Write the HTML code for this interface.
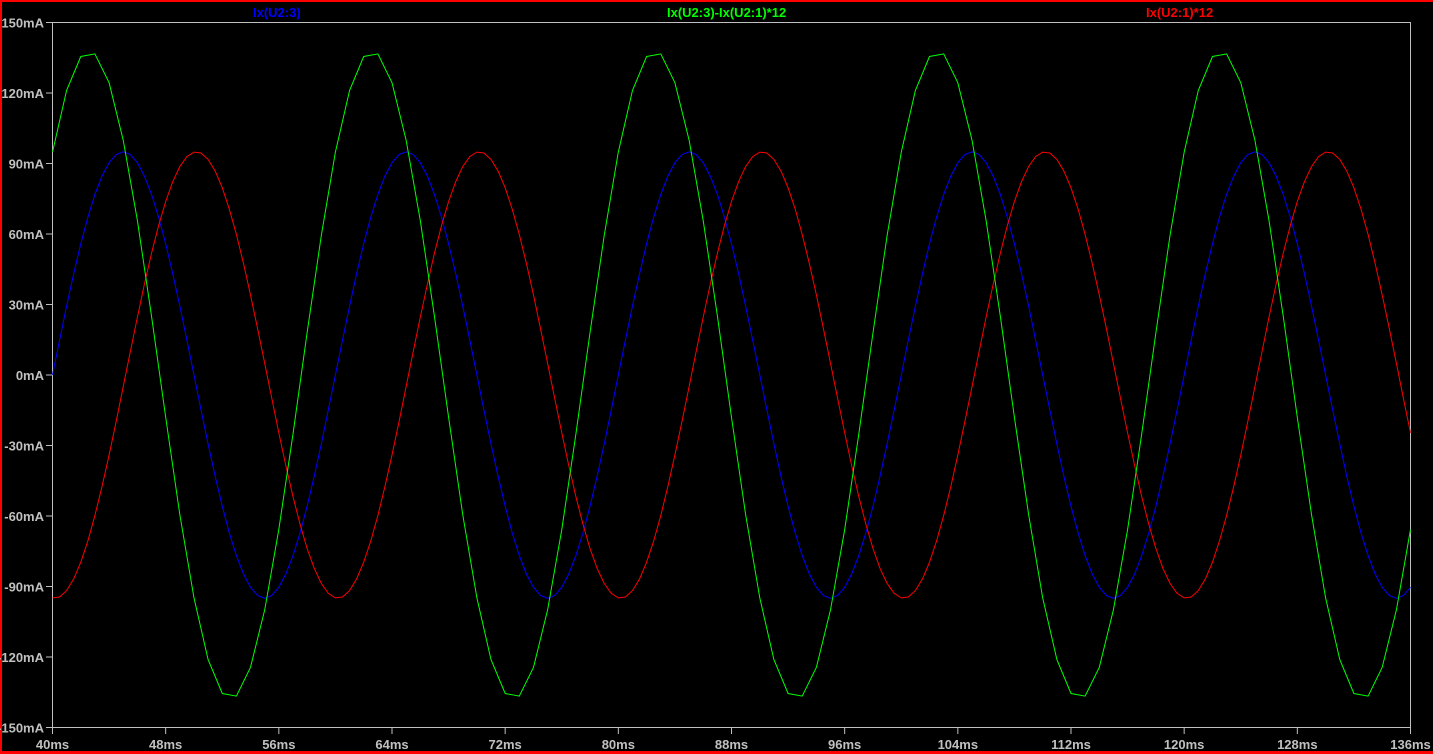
<!DOCTYPE html>
<html><head><style>
html,body{margin:0;padding:0;background:#000;}
body{width:1433px;height:754px;overflow:hidden;position:relative;}
svg{position:absolute;left:0;top:0;}
text{font-family:"Liberation Sans","DejaVu Sans",sans-serif;font-size:13px;font-weight:bold;}
</style></head><body>
<svg id="s" width="1433" height="754" xmlns="http://www.w3.org/2000/svg">
<rect x="0" y="0" width="1433" height="754" fill="#000"/>
<rect x="0" y="0" width="1433" height="2" fill="#ff0000"/>
<rect x="0" y="0" width="2" height="754" fill="#ff0000"/>
<rect x="0" y="751" width="1433" height="3" fill="#ff0000"/>
<rect x="52.5" y="22.5" width="1358" height="705" fill="none" stroke="#c0c0c0" stroke-width="1"/>
<g id="ax" fill="#c0c0c0"></g>
<text x="253" y="17" fill="#0000ff">Ix(U2:3)</text>
<text x="667" y="17" fill="#00ff00">Ix(U2:3)-Ix(U2:1)*12</text>
<text x="1146" y="17" fill="#ff0000">Ix(U2:1)*12</text>
<polyline id="b" fill="none" stroke="#0000ff" stroke-width="1"/>
<polyline id="r" fill="none" stroke="#ff0000" stroke-width="1"/>
<polyline id="g" fill="none" stroke="#00ff00" stroke-width="1"/>
</svg>
<script>
var L=52.5,R=1410.5,T=22.5,B=727.5;
function X(t){return L+(t-40)*(R-L)/96;}
function Y(v){return T+(150-v)*(B-T)/300;}
var ax=document.getElementById('ax'),h='';
for(var i=0;i<=10;i++){var v=150-30*i,y=Y(v);
h+='<rect x="46" y="'+(y-0.5)+'" width="6" height="1"/>';
h+='<text x="44" y="'+(y+5)+'" text-anchor="end">'+v+'mA</text>';}
for(var t=40;t<=136;t+=8){var x=X(t);
h+='<rect x="'+(x-0.5)+'" y="728" width="1" height="6"/>';
h+='<text x="'+x+'" y="749" text-anchor="middle">'+t+'ms</text>';}
ax.innerHTML=h;
var w=2*Math.PI/20,ph=93*Math.PI/180,A=95;
function bl(t){return A*Math.sin(w*(t-40));}
function rd(t){return A*Math.sin(w*(t-40)-ph);}
function pts(f,st){var p=[];for(var t=40;t<=136.0001;t+=st){p.push(X(t).toFixed(1)+','+Y(f(t)).toFixed(1));}return p.join(' ');}
document.getElementById('b').setAttribute('points',pts(bl,0.5));
document.getElementById('r').setAttribute('points',pts(rd,0.5));
document.getElementById('g').setAttribute('points',pts(function(t){return bl(t)-rd(t);},1));
</script>
</body></html>
